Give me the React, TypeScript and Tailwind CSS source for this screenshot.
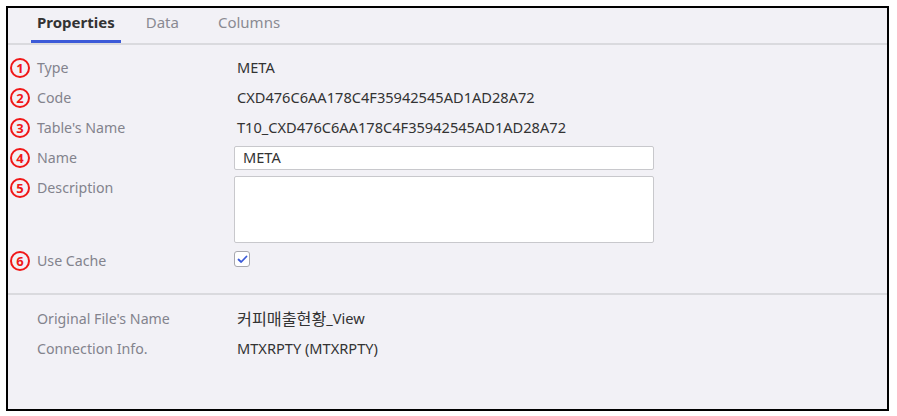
const fields = [
  { n: "1", label: "Type", value: "META" },
  { n: "2", label: "Code", value: "CXD476C6AA178C4F35942545AD1AD28A72" },
  { n: "3", label: "Table's Name", value: "T10_CXD476C6AA178C4F35942545AD1AD28A72" },
];

function Num({ n }: { n: string }) {
  return (
    <span className="flex h-[20px] w-[20px] shrink-0 items-center justify-center rounded-full border-2 border-[#f01818] text-[13px] font-bold leading-none text-[#f01818]">
      {n}
    </span>
  );
}

function Label({ n, children }: { n?: string; children: React.ReactNode }) {
  return (
    <div className="flex h-[30px] w-[226px] shrink-0 items-center gap-[7px] pl-[2px]">
      {n ? <Num n={n} /> : <span className="w-[20px]" />}
      <span className="text-[14.2px] text-[#83838d]">{children}</span>
    </div>
  );
}

function Value({ children }: { children: React.ReactNode }) {
  return <div className="flex h-[30px] items-center pl-[3px] text-[14.6px] text-[#333]">{children}</div>;
}

export default function App() {
  return (
    <div className="bg-white p-[6px] text-[14px] font-['Noto_Sans','Noto_Sans_CJK_KR',sans-serif]">
      <div className="flex h-[405px] w-[883px] flex-col border-2 border-black bg-[#f2f1f6]">
        {/* Tabs */}
        <div className="flex h-[37px] items-end border-b-2 border-[#dadade] pl-[23px] text-[15px]">
          <div className="flex h-full items-center border-b-[3px] border-[#3c5ad8] px-[6px] pb-[4px] font-bold text-[#333]">
            Properties
          </div>
          <div className="ml-[20px] flex h-full items-center px-[5px] pb-[7px] text-[#8a8a92]">Data</div>
          <div className="ml-[22px] flex h-full items-center px-[12px] pb-[7px] text-[#8a8a92]">Columns</div>
        </div>

        {/* Properties */}
        <div className="border-b-2 border-[#dadade] pb-[17px] pt-[8px]">
          {fields.map((f) => (
            <div key={f.n} className="flex">
              <Label n={f.n}>{f.label}</Label>
              <Value>{f.value}</Value>
            </div>
          ))}
          <div className="flex">
            <Label n="4">Name</Label>
            <div className="flex h-[30px] items-center">
              <div className="flex h-[24px] w-[420px] items-center rounded-[2px] border border-[#c8c8cc] bg-white pl-[8px] text-[14.6px] text-[#333]">
                META
              </div>
            </div>
          </div>
          <div className="flex">
            <Label n="5">Description</Label>
            <div className="mt-[3px] h-[67px] w-[420px] rounded-[2px] border border-[#c8c8cc] bg-white" />
          </div>
          <div className="mt-[3px] flex">
            <Label n="6">Use Cache</Label>
            <div className="flex h-[30px] items-start pt-[5px]">
              <div className="flex h-[16px] w-[16px] items-center justify-center rounded-[3px] border border-[#a8a8ae] bg-white">
                <svg width="11" height="9" viewBox="0 0 11 9" fill="none">
                  <path d="M1.5 4.5 L4.2 7 L9.5 1.5" stroke="#3c5ad8" strokeWidth="1.8" strokeLinecap="round" strokeLinejoin="round" />
                </svg>
              </div>
            </div>
          </div>
        </div>

        {/* Source */}
        <div className="pt-[9px]">
          <div className="flex">
            <Label>Original File's Name</Label>
            <Value>
              <span className="text-[16.2px]">커피매출현황</span>_View
            </Value>
          </div>
          <div className="flex">
            <Label>Connection Info.</Label>
            <Value>MTXRPTY (MTXRPTY)</Value>
          </div>
        </div>
      </div>
    </div>
  );
}
